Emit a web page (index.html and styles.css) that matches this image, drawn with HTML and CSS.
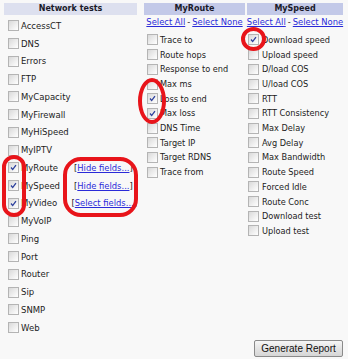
FILE: index.html
```html
<!DOCTYPE html>
<html lang="en">
<head>
    <meta charset="UTF-8">
    <title>Network tests</title>
    <link rel="stylesheet" href="styles.css">
</head>
<body>
    <div class="page">
        <div class="cols">
            <div class="col col-tests">
                <div class="col-head head-light">Network tests</div>
                <ul class="list list-tests">
                    <li><span class="cb"></span><span class="lbl">AccessCT</span></li>
                    <li><span class="cb"></span><span class="lbl">DNS</span></li>
                    <li><span class="cb"></span><span class="lbl">Errors</span></li>
                    <li><span class="cb"></span><span class="lbl">FTP</span></li>
                    <li><span class="cb"></span><span class="lbl">MyCapacity</span></li>
                    <li><span class="cb"></span><span class="lbl">MyFirewall</span></li>
                    <li><span class="cb"></span><span class="lbl">MyHiSpeed</span></li>
                    <li><span class="cb"></span><span class="lbl">MyIPTV</span></li>
                    <li><span class="cb on"><svg viewBox="0 0 11 11"><polyline points="2.5,5.5 4.5,8 8.5,2.5"/></svg></span><span class="lbl">MyRoute</span><span class="fields">[<a href="#">Hide fields...</a>]</span></li>
                    <li><span class="cb on"><svg viewBox="0 0 11 11"><polyline points="2.5,5.5 4.5,8 8.5,2.5"/></svg></span><span class="lbl">MySpeed</span><span class="fields">[<a href="#">Hide fields...</a>]</span></li>
                    <li><span class="cb on"><svg viewBox="0 0 11 11"><polyline points="2.5,5.5 4.5,8 8.5,2.5"/></svg></span><span class="lbl">MyVideo</span><span class="fields">[<a href="#">Select fields...</a>]</span></li>
                    <li><span class="cb"></span><span class="lbl">MyVoIP</span></li>
                    <li><span class="cb"></span><span class="lbl">Ping</span></li>
                    <li><span class="cb"></span><span class="lbl">Port</span></li>
                    <li><span class="cb"></span><span class="lbl">Router</span></li>
                    <li><span class="cb"></span><span class="lbl">Sip</span></li>
                    <li><span class="cb"></span><span class="lbl">SNMP</span></li>
                    <li><span class="cb"></span><span class="lbl">Web</span></li>
                </ul>
            </div>

            <div class="col col-route">
                <div class="col-head">MyRoute</div>
                <div class="select-row"><a href="#">Select All</a> - <a href="#">Select None</a></div>
                <ul class="list list-fields">
                    <li><span class="cb"></span>Trace to</li>
                    <li><span class="cb"></span>Route hops</li>
                    <li><span class="cb"></span>Response to end</li>
                    <li><span class="cb"></span>Max ms</li>
                    <li><span class="cb on"><svg viewBox="0 0 11 11"><polyline points="2.5,5.5 4.5,8 8.5,2.5"/></svg></span>Loss to end</li>
                    <li><span class="cb on"><svg viewBox="0 0 11 11"><polyline points="2.5,5.5 4.5,8 8.5,2.5"/></svg></span>Max loss</li>
                    <li><span class="cb"></span>DNS Time</li>
                    <li><span class="cb"></span>Target IP</li>
                    <li><span class="cb"></span>Target RDNS</li>
                    <li><span class="cb"></span>Trace from</li>
                </ul>
            </div>

            <div class="col col-speed">
                <div class="col-head">MySpeed</div>
                <div class="select-row"><a href="#">Select All</a> - <a href="#">Select None</a></div>
                <ul class="list list-fields">
                    <li><span class="cb on"><svg viewBox="0 0 11 11"><polyline points="2.5,5.5 4.5,8 8.5,2.5"/></svg></span>Download speed</li>
                    <li><span class="cb"></span>Upload speed</li>
                    <li><span class="cb"></span>D/load COS</li>
                    <li><span class="cb"></span>U/load COS</li>
                    <li><span class="cb"></span>RTT</li>
                    <li><span class="cb"></span>RTT Consistency</li>
                    <li><span class="cb"></span>Max Delay</li>
                    <li><span class="cb"></span>Avg Delay</li>
                    <li><span class="cb"></span>Max Bandwidth</li>
                    <li><span class="cb"></span>Route Speed</li>
                    <li><span class="cb"></span>Forced Idle</li>
                    <li><span class="cb"></span>Route Conc</li>
                    <li><span class="cb"></span>Download test</li>
                    <li><span class="cb"></span>Upload test</li>
                </ul>
            </div>
        </div>

        <button class="report-button">Generate Report</button>

        <!-- red marks drawn over the screenshot -->
        <span class="mark mark-tests"></span>
        <span class="mark mark-links"></span>
        <span class="mark mark-route"></span>
        <span class="mark mark-speed"></span>
    </div>
</body>
</html>
```

FILE: styles.css
```css
* {
    margin: 0;
    padding: 0;
    box-sizing: border-box;
}

body {
    font-family: "DejaVu Sans", Verdana, sans-serif;
    background: #f8f8f8;
    color: #1c1c1c;
}

.page {
    position: relative;
    width: 348px;
    height: 359px;
    padding: 3px 0 2px 4px;
    display: flex;
    flex-direction: column;
}

.cols {
    display: flex;
    align-items: flex-start;
}

.col-tests { width: 133px; }
.col-route { width: 101px; margin-left: 7px; }
.col-speed { width: 96px; margin-left: 2px; }

.col-head {
    height: 12px;
    line-height: 12px;
    text-align: center;
    font-size: 8px;
    font-weight: bold;
    background: #c3c9e8;
    color: #1a1a2a;
}

.col-head.head-light {
    background: #dde0ef;
}

.select-row {
    height: 15px;
    line-height: 15px;
    font-size: 8.4px;
    text-align: center;
    white-space: nowrap;
    display: flex;
    justify-content: center;
}

.select-row a {
    margin: 0 2px;
}

a {
    color: #2a2ad8;
    text-decoration: underline;
}

.list {
    list-style: none;
}

.list li {
    display: flex;
    align-items: center;
    white-space: nowrap;
}

.list-tests {
    padding: 2px 0 0 4px;
    font-size: 8.5px;
}

.list-tests li {
    height: 17.75px;
}

.list-tests .lbl {
    width: 53px;
}

.fields {
    font-size: 8.4px;
}

.list-fields {
    padding-top: 2.6px;
    font-size: 8.2px;
}

.list-fields li {
    height: 14.7px;
}

.col-route .list-fields { padding-left: 3px; }
.col-speed .list-fields { padding-left: 1px; }

.cb {
    flex: none;
    width: 11px;
    height: 11px;
    margin-right: 2px;
    border: 1px solid #b4b4b4;
    background: linear-gradient(135deg, #d9d9d9, #f4f4f4 70%, #ffffff);
    display: flex;
    align-items: center;
    justify-content: center;
}

.col-speed .cb { margin-right: 3px; }

.cb svg {
    width: 9px;
    height: 9px;
    fill: none;
    stroke: #2b3f9c;
    stroke-width: 1.6;
}

.report-button {
    margin-top: auto;
    align-self: flex-end;
    margin-right: 5px;
    width: 89px;
    height: 17px;
    font-family: "Liberation Sans", Arial, sans-serif;
    font-size: 10px;
    color: #111;
    border: 1px solid #8a8a8a;
    border-radius: 2px;
    background: linear-gradient(#f6f6f6, #e4e4e4 50%, #d6d6d6);
}

.mark {
    position: absolute;
    border: 4px solid #e8141a;
    border-radius: 50%;
}

.mark-tests { left: 2px; top: 155px; width: 24px; height: 62px; border-radius: 12px; }
.mark-links { left: 63px; top: 157px; width: 75px; height: 60px; border-radius: 18px; }
.mark-route { left: 138px; top: 78px; width: 28px; height: 46px; }
.mark-speed { left: 241px; top: 27px; width: 25px; height: 24px; }
```
